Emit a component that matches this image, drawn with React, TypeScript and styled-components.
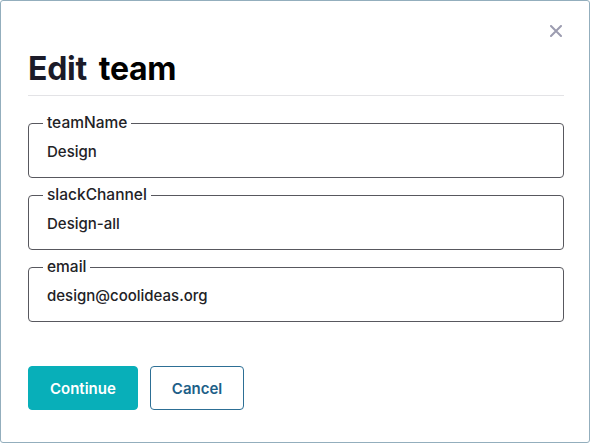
import React from "react";
import styled, { createGlobalStyle } from "styled-components";

const Global = createGlobalStyle`
  html, body { margin: 0; padding: 0; background: #ffffff; }
  body { font-family: Inter, "Noto Sans", Roboto, sans-serif; color: #222226; }
  * { box-sizing: border-box; }
`;

const Frame = styled.div`
  width: 590px;
  height: 443px;
  border: 1px solid #93aebd;
  border-radius: 3px;
  background: #fff;
  padding: 0 25px 0 27px;
  display: flex;
  flex-direction: column;
`;

const TopBar = styled.div`
  display: flex;
  justify-content: flex-end;
  margin-top: 24px;
  height: 12px;
  padding-right: 2px;
`;

const CloseButton = styled.button`
  width: 12px;
  height: 12px;
  padding: 0;
  border: none;
  background: none;
  display: flex;
  cursor: pointer;
`;

const Title = styled.h2`
  margin: 12px 0 0;
  padding-bottom: 6px;
  border-bottom: 1px solid #e3e3e6;
  font-size: 32px;
  line-height: 40px;
  font-weight: 700;
  letter-spacing: -0.3px;
  display: flex;
  gap: 12px;
`;

const TitleWord = styled.span<{ $tone: string }>`
  color: ${(p) => p.$tone};
`;

const Fields = styled.div`
  display: flex;
  flex-direction: column;
  gap: 8px;
  margin-top: 18px;
`;

const FieldBox = styled.fieldset`
  margin: 0;
  padding: 0 14px 13px;
  border: 1px solid #58585e;
  border-radius: 4px;
  min-width: 0;
`;

const Legend = styled.legend`
  padding: 0 4px;
  font-size: 15.5px;
  line-height: 18px;
  font-weight: 500;
  color: #222226;
`;

const FieldInput = styled.input`
  display: block;
  width: 100%;
  margin-top: 8px;
  height: 24px;
  line-height: 24px;
  padding: 0 4px;
  border: none;
  outline: none;
  background: transparent;
  font-family: inherit;
  font-size: 15px;
  font-weight: 500;
  color: #222226;
`;

const Actions = styled.div`
  display: flex;
  gap: 12px;
  margin-top: 44px;
`;

const Button = styled.button<{ $primary?: boolean }>`
  height: 44px;
  padding: 0 21px;
  border-radius: 4px;
  font-family: inherit;
  font-size: 15px;
  font-weight: 600;
  cursor: pointer;
  border: 1px solid ${(p) => (p.$primary ? "#08afb9" : "#2d6f95")};
  background: ${(p) => (p.$primary ? "#08afb9" : "#ffffff")};
  color: ${(p) => (p.$primary ? "#ffffff" : "#1d5f88")};
`;

const fields = [
  { label: "teamName", value: "Design" },
  { label: "slackChannel", value: "Design-all" },
  { label: "email", value: "design@coolideas.org" },
];

export default function App() {
  return (
    <>
      <Global />
      <Frame>
        <TopBar>
          <CloseButton aria-label="Close">
            <svg width="12" height="12" viewBox="0 0 12 12">
              <path d="M1 1L11 11M11 1L1 11" stroke="#9c9cb0" strokeWidth="2" strokeLinecap="round" />
            </svg>
          </CloseButton>
        </TopBar>
        <Title>
          <TitleWord $tone="#1b1b29">Edit</TitleWord>
          <TitleWord $tone="#000000">team</TitleWord>
        </Title>
        <Fields>
          {fields.map((f) => (
            <FieldBox key={f.label}>
              <Legend>{f.label}</Legend>
              <FieldInput readOnly value={f.value} />
            </FieldBox>
          ))}
        </Fields>
        <Actions>
          <Button $primary>Continue</Button>
          <Button>Cancel</Button>
        </Actions>
      </Frame>
    </>
  );
}
